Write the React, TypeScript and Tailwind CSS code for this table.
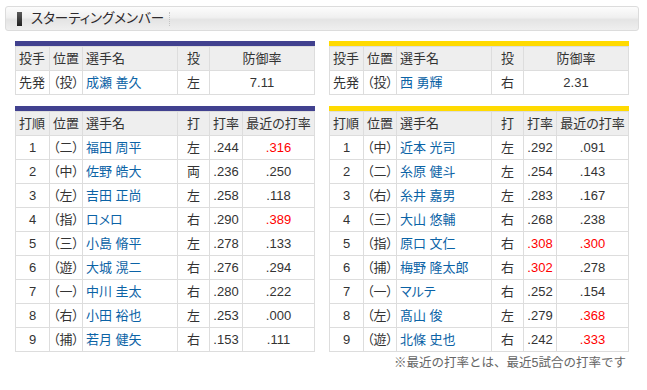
import React from "react";

type Batter = {
  no: string;
  pos: string;
  name: string;
  bat: string;
  avg: string;
  avgHot?: boolean;
  recent: string;
  recentHot?: boolean;
};

type Pitcher = { role: string; pos: string; name: string; hand: string; era: string };

const pitchers: Pitcher[] = [
  { role: "先発", pos: "（投）", name: "成瀬 善久", hand: "左", era: "7.11" },
  { role: "先発", pos: "（投）", name: "西 勇輝", hand: "右", era: "2.31" },
];

const orix: Batter[] = [
  { no: "1", pos: "（二）", name: "福田 周平", bat: "左", avg: ".244", recent: ".316", recentHot: true },
  { no: "2", pos: "（中）", name: "佐野 皓大", bat: "両", avg: ".236", recent: ".250" },
  { no: "3", pos: "（左）", name: "吉田 正尚", bat: "左", avg: ".258", recent: ".118" },
  { no: "4", pos: "（指）", name: "ロメロ", bat: "右", avg: ".290", recent: ".389", recentHot: true },
  { no: "5", pos: "（三）", name: "小島 脩平", bat: "左", avg: ".278", recent: ".133" },
  { no: "6", pos: "（遊）", name: "大城 滉二", bat: "右", avg: ".276", recent: ".294" },
  { no: "7", pos: "（一）", name: "中川 圭太", bat: "右", avg: ".280", recent: ".222" },
  { no: "8", pos: "（右）", name: "小田 裕也", bat: "左", avg: ".253", recent: ".000" },
  { no: "9", pos: "（捕）", name: "若月 健矢", bat: "右", avg: ".153", recent: ".111" },
];

const tigers: Batter[] = [
  { no: "1", pos: "（中）", name: "近本 光司", bat: "左", avg: ".292", recent: ".091" },
  { no: "2", pos: "（二）", name: "糸原 健斗", bat: "左", avg: ".254", recent: ".143" },
  { no: "3", pos: "（右）", name: "糸井 嘉男", bat: "左", avg: ".283", recent: ".167" },
  { no: "4", pos: "（三）", name: "大山 悠輔", bat: "右", avg: ".268", recent: ".238" },
  { no: "5", pos: "（指）", name: "原口 文仁", bat: "右", avg: ".308", avgHot: true, recent: ".300", recentHot: true },
  { no: "6", pos: "（捕）", name: "梅野 隆太郎", bat: "右", avg: ".302", avgHot: true, recent: ".278" },
  { no: "7", pos: "（一）", name: "マルテ", bat: "右", avg: ".252", recent: ".154" },
  { no: "8", pos: "（左）", name: "髙山 俊", bat: "左", avg: ".279", recent: ".368", recentHot: true },
  { no: "9", pos: "（遊）", name: "北條 史也", bat: "右", avg: ".242", recent: ".333", recentHot: true },
];

const th = "h-[24px] border border-[#dddddd] bg-[#eeeeee] px-[3px] font-normal";
const td = "h-[24px] border border-[#dddddd] px-[3px]";

function PitcherTable({ p, bar }: { p: Pitcher; bar: string }) {
  return (
    <div className={`w-[300px] border-t-[5px] ${bar} [font-feature-settings:'palt']`}>
      <table className="w-full table-fixed border-collapse">
        <colgroup>
          <col className="w-[34px]" />
          <col className="w-[33px]" />
          <col className="w-[95px]" />
          <col className="w-[32px]" />
          <col />
        </colgroup>
        <thead>
          <tr>
            <th className={`${th} text-left`}>投手</th>
            <th className={`${th} text-left`}>位置</th>
            <th className={`${th} text-left`}>選手名</th>
            <th className={`${th} text-center`}>投</th>
            <th className={`${th} text-center`}>防御率</th>
          </tr>
        </thead>
        <tbody>
          <tr>
            <td className={td}>{p.role}</td>
            <td className={`${td} whitespace-nowrap`}>{p.pos}</td>
            <td className={`${td} text-[#0b63a6]`}>{p.name}</td>
            <td className={`${td} text-center`}>{p.hand}</td>
            <td className={`${td} text-center`}>{p.era}</td>
          </tr>
        </tbody>
      </table>
    </div>
  );
}

function BatterTable({ rows, bar }: { rows: Batter[]; bar: string }) {
  return (
    <div className={`w-[300px] border-t-[5px] ${bar} [font-feature-settings:'palt']`}>
      <table className="w-full table-fixed border-collapse">
        <colgroup>
          <col className="w-[34px]" />
          <col className="w-[33px]" />
          <col className="w-[95px]" />
          <col className="w-[32px]" />
          <col className="w-[33px]" />
          <col />
        </colgroup>
        <thead>
          <tr>
            <th className={`${th} text-left`}>打順</th>
            <th className={`${th} text-left`}>位置</th>
            <th className={`${th} text-left`}>選手名</th>
            <th className={`${th} text-center`}>打</th>
            <th className={`${th} text-center whitespace-nowrap`}>打率</th>
            <th className={`${th} text-center whitespace-nowrap`}>最近の打率</th>
          </tr>
        </thead>
        <tbody>
          {rows.map((r) => (
            <tr key={r.no}>
              <td className={`${td} text-center`}>{r.no}</td>
              <td className={`${td} whitespace-nowrap`}>{r.pos}</td>
              <td className={`${td} text-[#0b63a6] whitespace-nowrap`}>{r.name}</td>
              <td className={`${td} text-center`}>{r.bat}</td>
              <td className={`${td} text-center ${r.avgHot ? "text-[#ff0000]" : ""}`}>{r.avg}</td>
              <td className={`${td} text-center ${r.recentHot ? "text-[#ff0000]" : ""}`}>{r.recent}</td>
            </tr>
          ))}
        </tbody>
      </table>
    </div>
  );
}

export default function App() {
  return (
    <div className="w-[647px] h-[390px] bg-white pt-[6px] pl-[5px] text-[#333333] text-[13px] leading-none font-['Liberation_Sans','Noto_Sans_CJK_JP',sans-serif]">
      {/* title bar */}
      <div className="w-[634px] h-[25px] flex items-center rounded-[3px] border border-[#dcdcdc] bg-[linear-gradient(#fcfcfc,#f0f0f0_45%,#e4e4e4_55%,#efefef)]">
        <div className="ml-[11px] w-[5px] h-[14px] bg-[linear-gradient(#5a5a5a,#222222)]" />
        <div className="ml-[9px] text-[13.5px] text-[#2e2a2d] [font-feature-settings:'palt']">スターティングメンバー</div>
        <div className="ml-[5px] h-[14px] border-l border-dotted border-[#c4c4c4]" />
      </div>

      <div className="ml-[10px] mt-[10px] flex gap-[14px]">
        <PitcherTable p={pitchers[0]} bar="border-[#41418f]" />
        <PitcherTable p={pitchers[1]} bar="border-[#ffda00]" />
      </div>

      <div className="ml-[10px] mt-[11px] flex gap-[14px]">
        <BatterTable rows={orix} bar="border-[#41418f]" />
        <BatterTable rows={tigers} bar="border-[#ffda00]" />
      </div>

      <div className="ml-[10px] w-[614px] mt-[5px] pr-[3px] text-right text-[12.5px] text-[#666666]">
        ※最近の打率とは、最近5試合の打率です
      </div>
    </div>
  );
}
